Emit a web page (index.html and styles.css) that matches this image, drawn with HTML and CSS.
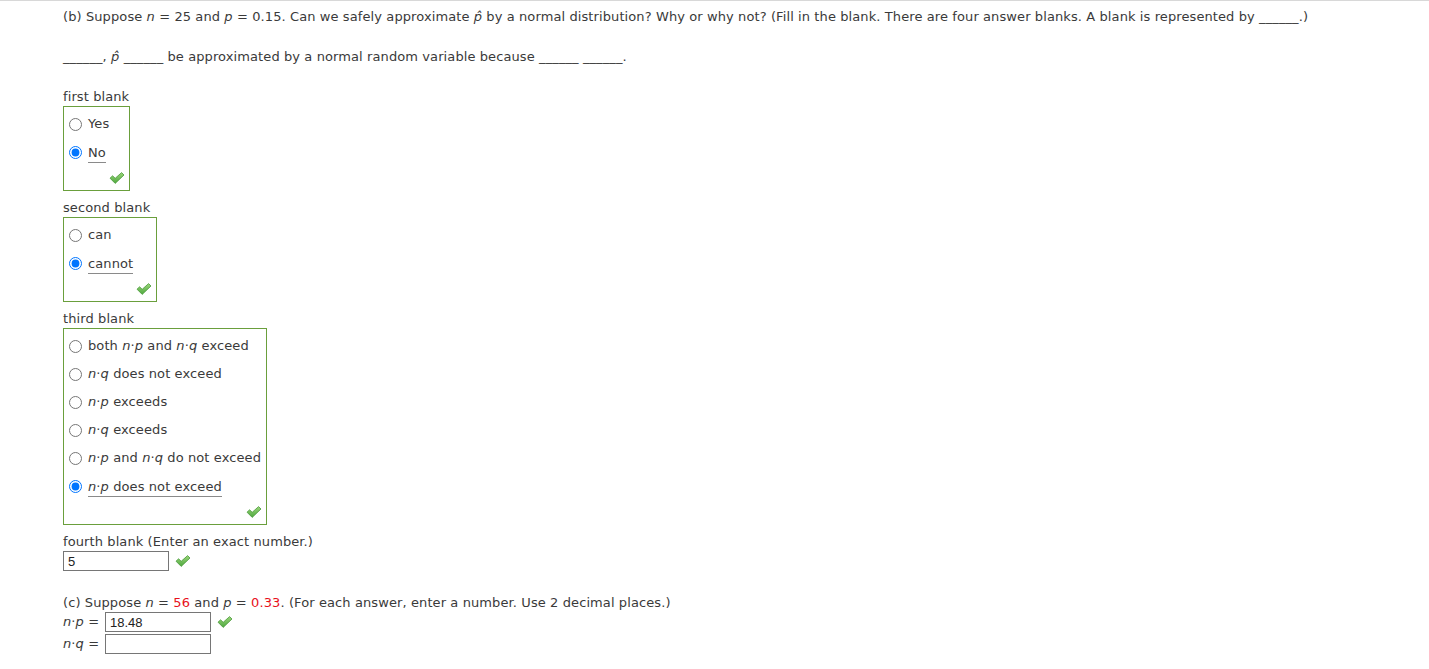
FILE: index.html
```html
<!DOCTYPE html>
<html lang="en">
<head>
  <meta charset="UTF-8">
  <title>Normal approximation</title>
  <link rel="stylesheet" href="styles.css">
</head>
<body>
  <div class="question">
    <p class="prompt">(b) Suppose <i>n</i> = 25 and <i>p</i> = 0.15. Can we safely approximate <i>p̂</i> by a normal distribution? Why or why not? (Fill in the blank. There are four answer blanks. A blank is represented by ______.)</p>
    <p class="prompt">______, <i>p̂</i> ______ be approximated by a normal random variable because ______ ______.</p>

    <div class="blank-label">first blank</div>
    <div class="choice-box box-1">
      <label class="option"><input type="radio" name="b1"><span>Yes</span></label>
      <label class="option"><input type="radio" name="b1" checked><span class="picked">No</span></label>
      <div class="mark-row"><svg class="check" viewBox="0 0 16 12"><use href="#tick"/></svg></div>
    </div>

    <div class="blank-label">second blank</div>
    <div class="choice-box box-2">
      <label class="option"><input type="radio" name="b2"><span>can</span></label>
      <label class="option"><input type="radio" name="b2" checked><span class="picked">cannot</span></label>
      <div class="mark-row"><svg class="check" viewBox="0 0 16 12"><use href="#tick"/></svg></div>
    </div>

    <div class="blank-label">third blank</div>
    <div class="choice-box box-3">
      <label class="option"><input type="radio" name="b3"><span>both <i>n</i>·<i>p</i> and <i>n</i>·<i>q</i> exceed</span></label>
      <label class="option"><input type="radio" name="b3"><span><i>n</i>·<i>q</i> does not exceed</span></label>
      <label class="option"><input type="radio" name="b3"><span><i>n</i>·<i>p</i> exceeds</span></label>
      <label class="option"><input type="radio" name="b3"><span><i>n</i>·<i>q</i> exceeds</span></label>
      <label class="option"><input type="radio" name="b3"><span><i>n</i>·<i>p</i> and <i>n</i>·<i>q</i> do not exceed</span></label>
      <label class="option"><input type="radio" name="b3" checked><span class="picked"><i>n</i>·<i>p</i> does not exceed</span></label>
      <div class="mark-row"><svg class="check" viewBox="0 0 16 12"><use href="#tick"/></svg></div>
    </div>

    <div class="blank-label">fourth blank (Enter an exact number.)</div>
    <div class="answer-row">
      <input class="answer" type="text" value="5">
      <svg class="check inline" viewBox="0 0 16 12"><use href="#tick"/></svg>
    </div>

    <p class="prompt part-c">(c) Suppose <i>n</i> = <span class="given">56</span> and <i>p</i> = <span class="given">0.33</span>. (For each answer, enter a number. Use 2 decimal places.)</p>
    <div class="answer-row">
      <span class="eq"><i>n</i>·<i>p</i> =</span>
      <input class="answer" type="text" value="18.48">
      <svg class="check inline" viewBox="0 0 16 12"><use href="#tick"/></svg>
    </div>
    <div class="answer-row">
      <span class="eq"><i>n</i>·<i>q</i> =</span>
      <input class="answer" type="text" value="">
    </div>
  </div>

  <svg width="0" height="0" class="defs">
    <defs>
      <linearGradient id="tickFill" x1="0" y1="0" x2="0" y2="1">
        <stop offset="0" stop-color="#9bd67a"/>
        <stop offset="1" stop-color="#4fa83f"/>
      </linearGradient>
      <path id="tick" d="M1 6.2 L3.6 3.8 L6.2 6.3 L12.6 0.6 L15 3 L6.2 11.4 Z" fill="url(#tickFill)" stroke="#4b9a3c" stroke-width="0.8" stroke-linejoin="round"/>
    </defs>
  </svg>
</body>
</html>
```

FILE: styles.css
```css
body {
  margin: 0;
  font-family: "DejaVu Sans", Verdana, sans-serif;
  font-size: 13px;
  line-height: 16px;
  letter-spacing: 0.1px;
  color: #3a3a3a;
  background: #fff;
  border-top: 1px solid #d8d8d8;
}
.question {
  padding: 8px 0 0 63px;
}
.prompt {
  margin: 0 0 24px 0;
}
i {
  font-style: italic;
}
.blank-label {
  margin-bottom: 1px;
}
.choice-box {
  border: 1px solid #6a9f3c;
  padding: 3px 4px 6px 4px;
  margin-bottom: 9px;
  box-sizing: border-box;
}
.box-1 { width: 67px; }
.box-2 { width: 94px; }
.box-3 { width: 204px; }
.option {
  display: flex;
  align-items: center;
  height: 28px;
  white-space: nowrap;
}
.option input {
  width: 13px;
  height: 13px;
  margin: 1px 6px 0 1px;
  accent-color: #0075ff;
}
.picked {
  border-bottom: 1px solid #8a8a8a;
  padding-bottom: 1px;
  margin-top: 3px;
}
.mark-row {
  display: flex;
  justify-content: flex-end;
  margin-top: 6px;
  height: 12px;
}
.check {
  width: 16px;
  height: 12px;
  display: block;
}
.check.inline {
  margin-left: 6px;
}
.answer-row {
  display: flex;
  align-items: center;
  height: 20px;
  margin-bottom: 2px;
}
.answer {
  width: 106px;
  height: 20px;
  box-sizing: border-box;
  border: 1px solid #767676;
  border-radius: 0;
  padding: 0 4px;
  font-family: "Liberation Sans", Arial, sans-serif;
  font-size: 13px;
  letter-spacing: 0;
  color: #222;
  margin: 0;
}
.eq {
  width: 42px;
  white-space: nowrap;
}
.part-c {
  margin: 24px 0 1px 0;
}
.given {
  color: #e8101a;
}
.defs {
  position: absolute;
}
```
